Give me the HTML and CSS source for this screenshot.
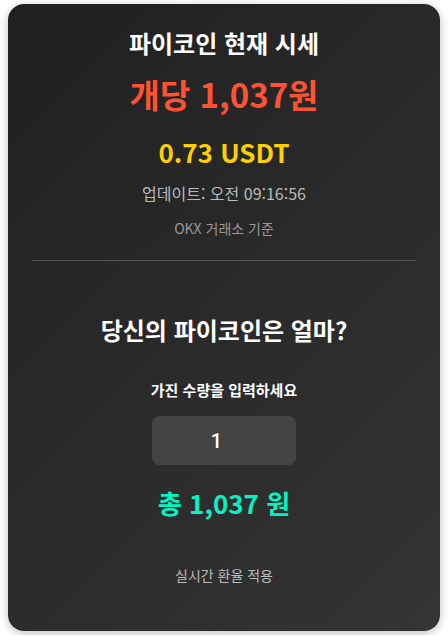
FILE: index.html
```html
<!DOCTYPE html>
<html lang="ko">
<head>
    <meta charset="UTF-8">
    <title>파이코인 시세</title>
    <link rel="stylesheet" href="styles.css">
</head>
<body>
<div class="card">
    <h1 class="title">파이코인 현재 시세</h1>
    <div class="price">개당 1,037원</div>
    <div class="usdt">0.73 USDT</div>
    <div class="updated">업데이트: 오전 09:16:56</div>
    <div class="source">OKX 거래소 기준</div>
    <hr class="divider">
    <h2 class="question">당신의 파이코인은 얼마?</h2>
    <label class="label" for="amount">가진 수량을 입력하세요</label>
    <input class="amount" id="amount" type="number" min="0" value="1">
    <div class="total">총 1,037 원</div>
    <div class="note">실시간 환율 적용</div>
</div>
</body>
</html>
```

FILE: styles.css
```css
*{
    margin: 0;
    padding: 0;
    box-sizing: border-box;
}
body{
    background: #fff;
    padding: 4px 8px;
    font-family: "Noto Sans CJK KR", "Noto Sans", sans-serif;
}
.card{
    width: 432px;
    min-height: 627px;
    padding: 24px 24px 46px;
    border-radius: 16px;
    background: linear-gradient(135deg, #202020 0%, #343434 100%);
    box-shadow: 0 2px 10px rgba(0,0,0,0.25);
    text-align: center;
    color: #fff;
}
.title{
    font-size: 24px;
    font-weight: 700;
    line-height: 30px;
}
.price{
    margin-top: 14px;
    font-size: 33px;
    font-weight: 700;
    line-height: 44px;
    color: #ff5233;
}
.usdt{
    margin-top: 18px;
    font-size: 26px;
    font-weight: 700;
    line-height: 36px;
    color: #ffd000;
}
.updated{
    margin-top: 11px;
    font-size: 16px;
    line-height: 24px;
    color: #bbb;
}
.source{
    margin-top: 13px;
    font-size: 14px;
    line-height: 20px;
    color: #999;
}
.divider{
    margin-top: 22px;
    border: 0;
    height: 1px;
    background: #555;
}
.question{
    margin-top: 53px;
    font-size: 24px;
    font-weight: 700;
    line-height: 32px;
}
.label{
    display: block;
    margin-top: 33px;
    font-size: 15px;
    font-weight: 700;
    line-height: 22px;
}
.amount{
    display: block;
    margin: 15px auto 0;
    width: 144px;
    height: 49px;
    padding: 0 8px;
    border: 0;
    border-radius: 8px;
    background: #444;
    color: #fff;
    font-family: Roboto, "Noto Sans", sans-serif;
    font-size: 20px;
    font-weight: 500;
    text-align: center;
    outline: none;
}
.total{
    margin-top: 19px;
    font-size: 26px;
    font-weight: 700;
    line-height: 38px;
    color: #00f5c4;
}
.note{
    margin-top: 43px;
    font-size: 14px;
    line-height: 20px;
    color: #bbb;
}
```
